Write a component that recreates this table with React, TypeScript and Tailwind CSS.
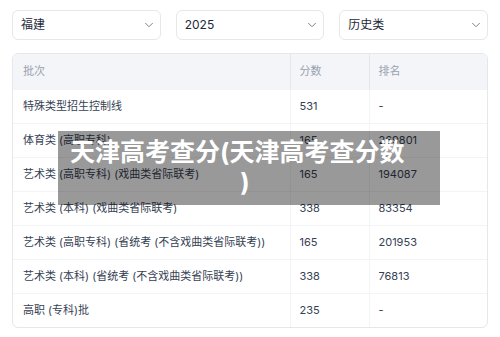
import { ChevronDown } from 'lucide-react'

const rows = [
  { batch: '特殊类型招生控制线', score: '531', rank: '-' },
  { batch: '体育类 (高职专科)', score: '165', rank: '269801' },
  { batch: '艺术类 (高职专科) (戏曲类省际联考)', score: '165', rank: '194087' },
  { batch: '艺术类 (本科) (戏曲类省际联考)', score: '338', rank: '83354' },
  { batch: '艺术类 (高职专科) (省统考 (不含戏曲类省际联考))', score: '165', rank: '201953' },
  { batch: '艺术类 (本科) (省统考 (不含戏曲类省际联考))', score: '338', rank: '76813' },
  { batch: '高职 (专科)批', score: '235', rank: '-' },
]

const font = { fontFamily: '"Inter", "Noto Sans CJK SC", sans-serif' }

function Select({ value }: { value: string }) {
  return (
    <div className="flex-1 h-[30px] flex items-center justify-between pl-2 pr-1 border border-gray-200 rounded-md bg-white">
      <span className="text-[12px] text-gray-800">{value}</span>
      <ChevronDown className="w-3.5 h-3.5 text-gray-500" strokeWidth={1.5} />
    </div>
  )
}

export default function App() {
  return (
    <div className="relative w-[500px] h-[337px] bg-white overflow-hidden" style={font}>
      <div className="px-3 pt-2.5">
        <div className="flex gap-[15px]">
          <Select value="福建" />
          <Select value="2025" />
          <Select value="历史类" />
        </div>

        <div className="mt-[13px] border border-gray-200 rounded-md overflow-hidden">
          <table className="w-full border-collapse text-[11px]">
            <thead>
              <tr className="bg-[#f4f5f8] h-[35px] text-gray-400">
                <th className="text-left font-normal pl-[10px] w-[277px]">批次</th>
                <th className="text-left font-normal pl-[9px] w-[79px] border-l border-gray-200">分数</th>
                <th className="text-left font-normal pl-[9px] border-l border-gray-200">排名</th>
              </tr>
            </thead>
            <tbody className="text-gray-700">
              {rows.map((r, i) => (
                <tr key={i} className="h-[34px] border-t border-gray-100">
                  <td className="pl-[10px]">{r.batch}</td>
                  <td className="pl-[9px] border-l border-gray-100">{r.score}</td>
                  <td className="pl-[9px] border-l border-gray-100">{r.rank}</td>
                </tr>
              ))}
            </tbody>
          </table>
        </div>
      </div>

      {/* caption overlay */}
      <div className="absolute left-[58px] top-[131px] w-[382px] h-[74px] bg-black/40 pl-3 pt-[6px] text-white font-bold text-[25px] leading-[30px]">
        <div>天津高考查分(天津高考查分数</div>
        <div className="text-center pr-5">)</div>
      </div>
    </div>
  )
}
